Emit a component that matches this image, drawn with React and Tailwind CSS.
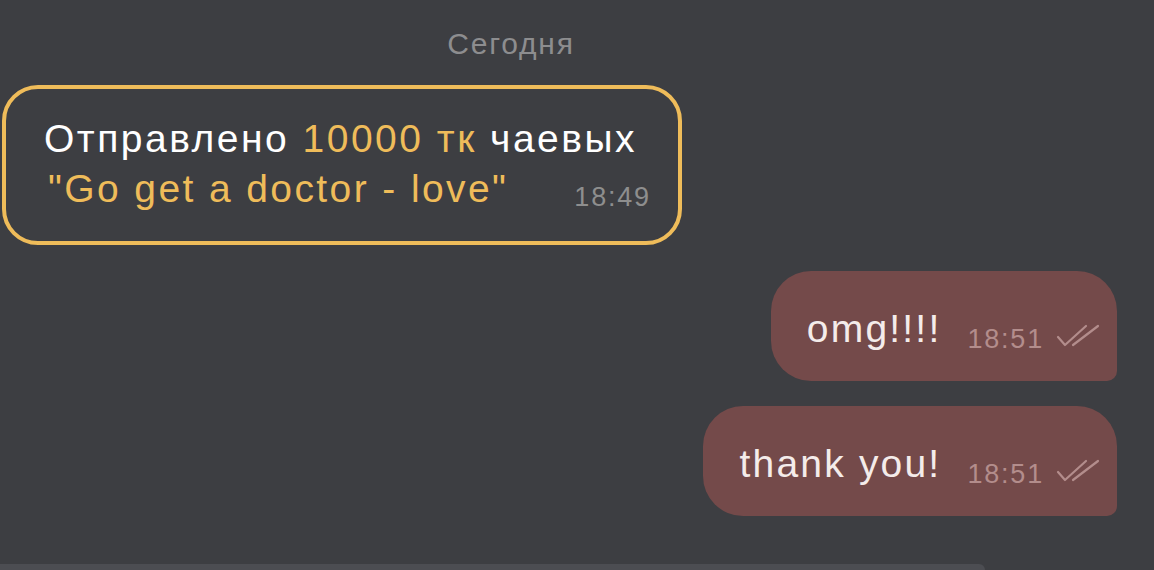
import React from 'react';

/* ---------- double check mark ---------- */
function Ticks() {
  return (
    <svg width="44" height="26" viewBox="0 0 44 26" fill="none" className="ml-3 mb-[2px]">
      <path d="M2 14 L9 22 L30 3" stroke="currentColor" strokeWidth="2.2" strokeLinecap="round" strokeLinejoin="round" />
      <path d="M17 22 L42 3" stroke="currentColor" strokeWidth="2.2" strokeLinecap="round" />
    </svg>
  );
}

function OutBubble({ text, time }) {
  return (
    <div className="flex justify-end pr-[37px]">
      <div className="h-[110px] flex items-center bg-[#744a4a] rounded-[40px] rounded-br-[10px] pl-[36px] pr-[17px] pt-[12px]">
        <span className="text-[39px] leading-none tracking-[2.2px] text-[#f4ecea] -mt-[7px]">{text}</span>
        <span className="ml-[26px] text-[27px] leading-none tracking-[1.8px] text-[#b38d8c] mt-[14px]">{time}</span>
        <span className="text-[#b38d8c] mt-[10px]">
          <Ticks />
        </span>
      </div>
    </div>
  );
}

export default function App() {
  return (
    <div
      className="w-[1154px] h-[570px] overflow-hidden bg-[#3d3e42] flex flex-col"
      style={{ fontFamily: '"Liberation Sans", Arial, sans-serif' }}
    >
      <div className="pt-[27px] text-center text-[30px] leading-[33px] tracking-[1.8px] text-[#8d8d8f] pr-[132px]">
        Сегодня
      </div>

      {/* ---- tip message ---- */}
      <div className="mt-[25px] ml-[2px] w-[680px] h-[160px] border-4 border-[#efbc5a] rounded-[36px] pl-[38px] pt-[26px]">
        <p className="text-[39px] leading-[48px] tracking-[2.5px] text-white">
          Отправлено <span className="text-[#efbc5a]">10000 тк</span> чаевых
        </p>
        <div className="flex items-end">
          <p className="text-[39px] leading-[48px] tracking-[2.4px] text-[#efbc5a] pl-[4px] mt-[2px]">"Go get a doctor - love"</p>
          <span className="ml-[66px] mb-[2px] text-[27px] leading-none tracking-[1.8px] text-[#8e8e8e]">18:49</span>
        </div>
      </div>

      <div className="mt-[26px] flex flex-col gap-[25px]">
        <OutBubble text="omg!!!!" time="18:51" />
        <OutBubble text="thank you!" time="18:51" />
      </div>

      <div className="mt-auto w-[985px] h-[6px] bg-[#4c4d52] rounded-tr-[10px]" />
    </div>
  );
}
